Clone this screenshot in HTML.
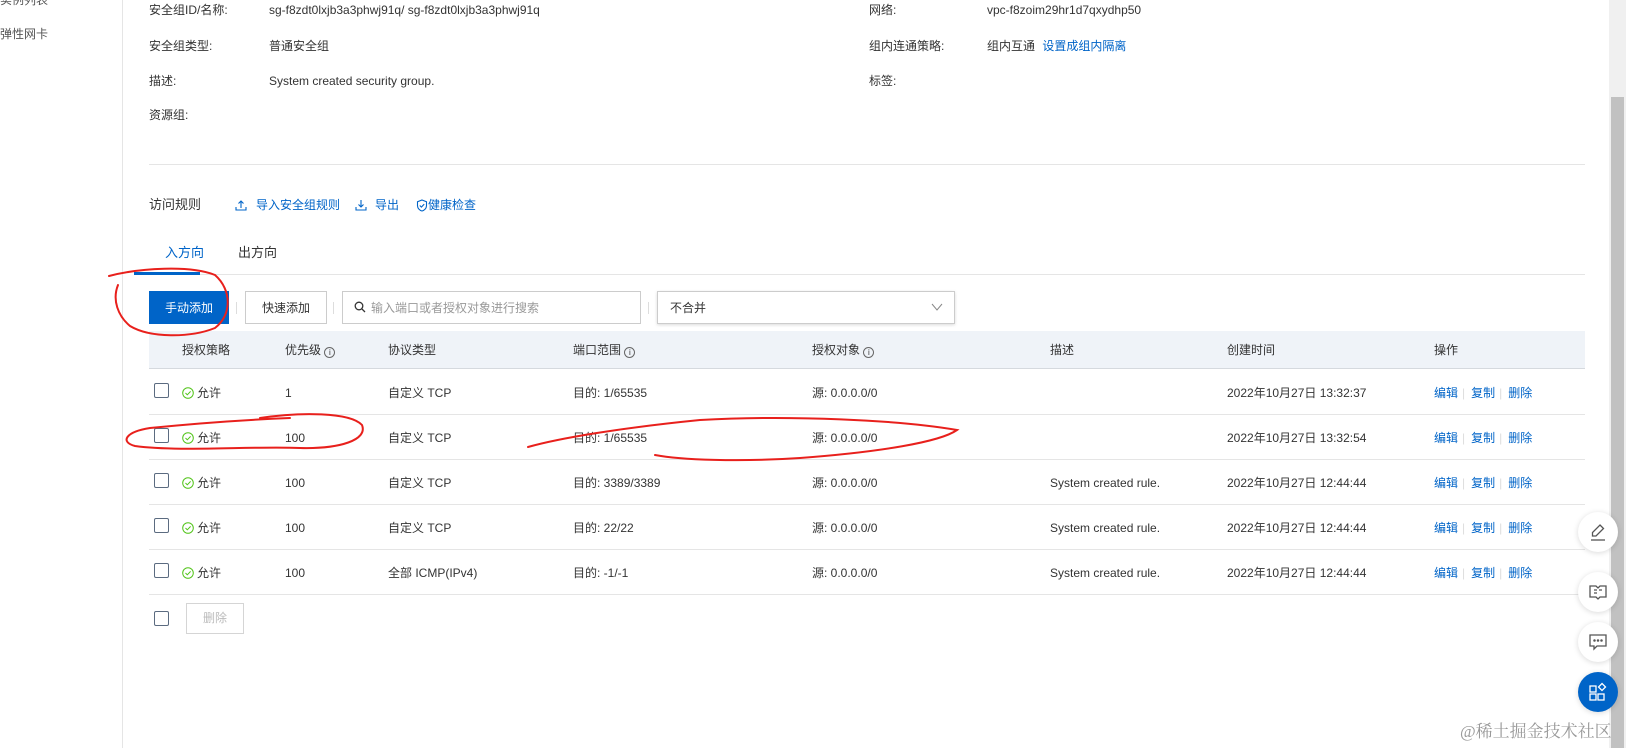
<!DOCTYPE html>
<html><head><meta charset="utf-8">
<style>
*{margin:0;padding:0;box-sizing:border-box}
body{width:1626px;height:748px;overflow:hidden;background:#fff;font-family:"Liberation Sans","Noto Sans CJK SC",sans-serif;font-size:12px;color:#333;position:relative}
.a{position:absolute;white-space:nowrap}
.l{line-height:16px}
.blue{color:#0064c8}
.sb{position:absolute;left:0;top:0;width:123px;height:748px;border-right:1px solid #e5e5e5}
.hr{position:absolute;height:1px;background:#e5e5e5}
.btn{position:absolute;border:1px solid #ccc;background:#fff;text-align:center;line-height:32px;font-size:12px}
.cb{position:absolute;width:15px;height:15px;border:1px solid #5b6b80;border-radius:2px;background:#fff}
.th{position:absolute;left:149px;top:331px;width:1436px;height:38px;background:#eff3f8;border-bottom:1px solid #d5d9de}
.vs{position:absolute;width:1px;height:12px;background:#ddd}
.fb{position:absolute;width:40px;height:40px;border-radius:50%;background:#fff;box-shadow:0 1px 6px rgba(0,0,0,.15)}
</style></head><body>
<div class="sb"></div>
<div class="a l" style="left:0;top:-8px;color:#555">实例列表</div>
<div class="a l" style="left:0;top:26px;color:#555">弹性网卡</div>

<div class="a l" style="left:149px;top:2px">安全组ID/名称:</div>
<div class="a l" style="left:269px;top:2px">sg-f8zdt0lxjb3a3phwj91q/ sg-f8zdt0lxjb3a3phwj91q</div>
<div class="a l" style="left:869px;top:2px">网络:</div>
<div class="a l" style="left:987px;top:2px">vpc-f8zoim29hr1d7qxydhp50</div>
<div class="a l" style="left:149px;top:38px">安全组类型:</div>
<div class="a l" style="left:269px;top:38px">普通安全组</div>
<div class="a l" style="left:869px;top:38px">组内连通策略:</div>
<div class="a l" style="left:987px;top:38px">组内互通 <span class="blue" style="margin-left:4px">设置成组内隔离</span></div>
<div class="a l" style="left:149px;top:73px">描述:</div>
<div class="a l" style="left:269px;top:73px">System created security group.</div>
<div class="a l" style="left:869px;top:73px">标签:</div>
<div class="a l" style="left:149px;top:107px">资源组:</div>
<div class="hr" style="left:149px;top:164px;width:1436px"></div>

<div class="a" style="left:149px;top:196px;font-size:13px;line-height:18px">访问规则</div>
<svg class="a" style="left:235px;top:199px" width="12" height="12" viewBox="0 0 12 12" fill="none" stroke="#0064c8" stroke-width="1.1"><path d="M6 9V2M3.5 4.5L6 2l2.5 2.5M1 8v3h10V8"/></svg>
<div class="a l blue" style="left:256px;top:197px">导入安全组规则</div>
<svg class="a" style="left:355px;top:199px" width="12" height="12" viewBox="0 0 12 12" fill="none" stroke="#0064c8" stroke-width="1.1"><path d="M6 1v7M3.5 5.5L6 8l2.5-2.5M1 8v3h10V8"/></svg>
<div class="a l blue" style="left:375px;top:197px">导出</div>
<svg class="a" style="left:416px;top:199px" width="12" height="13" viewBox="0 0 12 13" fill="none" stroke="#0064c8" stroke-width="1.1"><path d="M6 1l4.5 1.8v4C10.5 9.5 8 11.5 6 12 4 11.5 1.5 9.5 1.5 6.8v-4z"/><path d="M3.8 6.5l1.6 1.6 2.8-3"/></svg>
<div class="a l blue" style="left:428px;top:197px">健康检查</div>

<div class="a" style="left:165px;top:244px;font-size:13px;line-height:18px;color:#0064c8">入方向</div>
<div class="a" style="left:238px;top:244px;font-size:13px;line-height:18px">出方向</div>
<div class="hr" style="left:134px;top:274px;width:1451px"></div>
<div class="a" style="left:134px;top:272px;width:66px;height:3px;background:#0064c8"></div>

<div class="btn" style="left:149px;top:291px;width:80px;height:33px;background:#0064c8;border-color:#0064c8;color:#fff">手动添加</div>
<div class="vs" style="left:236px;top:302px"></div>
<div class="btn" style="left:245px;top:291px;width:82px;height:33px">快速添加</div>
<div class="vs" style="left:333px;top:302px"></div>
<div class="btn" style="left:342px;top:291px;width:299px;height:33px;text-align:left;padding-left:28px;color:#999">输入端口或者授权对象进行搜索</div>
<svg class="a" style="left:354px;top:301px" width="12" height="12" viewBox="0 0 12 12" fill="none" stroke="#333" stroke-width="1.3"><circle cx="5" cy="5" r="3.8"/><path d="M7.8 7.8L11 11"/></svg>
<div class="vs" style="left:648px;top:302px"></div>
<div class="btn" style="left:657px;top:291px;width:298px;height:33px;text-align:left;padding-left:12px;box-shadow:0 1px 3px rgba(0,0,0,.15)">不合并</div>
<svg class="a" style="left:931px;top:302px" width="12" height="10" viewBox="0 0 12 10" fill="none" stroke="#888" stroke-width="1"><path d="M1 2l5 6 5-6"/></svg>

<div class="th"></div>
<div class="a l" style="left:182px;top:342px">授权策略</div>
<div class="a l" style="left:285px;top:342px">优先级 <span style="display:inline-block;width:11px;height:11px;border:1px solid #666;border-radius:50%;font-size:8px;line-height:9px;text-align:center;vertical-align:-1px">i</span></div>
<div class="a l" style="left:388px;top:342px">协议类型</div>
<div class="a l" style="left:573px;top:342px">端口范围 <span style="display:inline-block;width:11px;height:11px;border:1px solid #666;border-radius:50%;font-size:8px;line-height:9px;text-align:center;vertical-align:-1px">i</span></div>
<div class="a l" style="left:812px;top:342px">授权对象 <span style="display:inline-block;width:11px;height:11px;border:1px solid #666;border-radius:50%;font-size:8px;line-height:9px;text-align:center;vertical-align:-1px">i</span></div>
<div class="a l" style="left:1050px;top:342px">描述</div>
<div class="a l" style="left:1227px;top:342px">创建时间</div>
<div class="a l" style="left:1434px;top:342px">操作</div>

<div class="cb" style="left:154px;top:383px"></div>
<svg class="a" style="left:182px;top:387px" width="12" height="12" viewBox="0 0 12 12" fill="none" stroke="#52c41a" stroke-width="1"><circle cx="6" cy="6" r="5.3"/><path d="M3.5 6l1.8 1.8L8.6 4.4"/></svg>
<div class="a l" style="left:197px;top:385px">允许</div>
<div class="a l" style="left:285px;top:385px">1</div>
<div class="a l" style="left:388px;top:385px">自定义 TCP</div>
<div class="a l" style="left:573px;top:385px">目的: 1/65535</div>
<div class="a l" style="left:812px;top:385px">源: 0.0.0.0/0</div>
<div class="a l" style="left:1227px;top:385px">2022年10月27日 13:32:37</div>
<div class="a l blue" style="left:1434px;top:385px">编辑<span style="color:#ddd;margin:0 6px 0 4px">|</span>复制<span style="color:#ddd;margin:0 6px 0 4px">|</span>删除</div>
<div class="hr" style="left:149px;top:414px;width:1436px"></div>

<div class="cb" style="left:154px;top:428px"></div>
<svg class="a" style="left:182px;top:432px" width="12" height="12" viewBox="0 0 12 12" fill="none" stroke="#52c41a" stroke-width="1"><circle cx="6" cy="6" r="5.3"/><path d="M3.5 6l1.8 1.8L8.6 4.4"/></svg>
<div class="a l" style="left:197px;top:430px">允许</div>
<div class="a l" style="left:285px;top:430px">100</div>
<div class="a l" style="left:388px;top:430px">自定义 TCP</div>
<div class="a l" style="left:573px;top:430px">目的: 1/65535</div>
<div class="a l" style="left:812px;top:430px">源: 0.0.0.0/0</div>
<div class="a l" style="left:1227px;top:430px">2022年10月27日 13:32:54</div>
<div class="a l blue" style="left:1434px;top:430px">编辑<span style="color:#ddd;margin:0 6px 0 4px">|</span>复制<span style="color:#ddd;margin:0 6px 0 4px">|</span>删除</div>
<div class="hr" style="left:149px;top:459px;width:1436px"></div>

<div class="cb" style="left:154px;top:473px"></div>
<svg class="a" style="left:182px;top:477px" width="12" height="12" viewBox="0 0 12 12" fill="none" stroke="#52c41a" stroke-width="1"><circle cx="6" cy="6" r="5.3"/><path d="M3.5 6l1.8 1.8L8.6 4.4"/></svg>
<div class="a l" style="left:197px;top:475px">允许</div>
<div class="a l" style="left:285px;top:475px">100</div>
<div class="a l" style="left:388px;top:475px">自定义 TCP</div>
<div class="a l" style="left:573px;top:475px">目的: 3389/3389</div>
<div class="a l" style="left:812px;top:475px">源: 0.0.0.0/0</div>
<div class="a l" style="left:1050px;top:475px">System created rule.</div>
<div class="a l" style="left:1227px;top:475px">2022年10月27日 12:44:44</div>
<div class="a l blue" style="left:1434px;top:475px">编辑<span style="color:#ddd;margin:0 6px 0 4px">|</span>复制<span style="color:#ddd;margin:0 6px 0 4px">|</span>删除</div>
<div class="hr" style="left:149px;top:504px;width:1436px"></div>

<div class="cb" style="left:154px;top:518px"></div>
<svg class="a" style="left:182px;top:522px" width="12" height="12" viewBox="0 0 12 12" fill="none" stroke="#52c41a" stroke-width="1"><circle cx="6" cy="6" r="5.3"/><path d="M3.5 6l1.8 1.8L8.6 4.4"/></svg>
<div class="a l" style="left:197px;top:520px">允许</div>
<div class="a l" style="left:285px;top:520px">100</div>
<div class="a l" style="left:388px;top:520px">自定义 TCP</div>
<div class="a l" style="left:573px;top:520px">目的: 22/22</div>
<div class="a l" style="left:812px;top:520px">源: 0.0.0.0/0</div>
<div class="a l" style="left:1050px;top:520px">System created rule.</div>
<div class="a l" style="left:1227px;top:520px">2022年10月27日 12:44:44</div>
<div class="a l blue" style="left:1434px;top:520px">编辑<span style="color:#ddd;margin:0 6px 0 4px">|</span>复制<span style="color:#ddd;margin:0 6px 0 4px">|</span>删除</div>
<div class="hr" style="left:149px;top:549px;width:1436px"></div>

<div class="cb" style="left:154px;top:563px"></div>
<svg class="a" style="left:182px;top:567px" width="12" height="12" viewBox="0 0 12 12" fill="none" stroke="#52c41a" stroke-width="1"><circle cx="6" cy="6" r="5.3"/><path d="M3.5 6l1.8 1.8L8.6 4.4"/></svg>
<div class="a l" style="left:197px;top:565px">允许</div>
<div class="a l" style="left:285px;top:565px">100</div>
<div class="a l" style="left:388px;top:565px">全部 ICMP(IPv4)</div>
<div class="a l" style="left:573px;top:565px">目的: -1/-1</div>
<div class="a l" style="left:812px;top:565px">源: 0.0.0.0/0</div>
<div class="a l" style="left:1050px;top:565px">System created rule.</div>
<div class="a l" style="left:1227px;top:565px">2022年10月27日 12:44:44</div>
<div class="a l blue" style="left:1434px;top:565px">编辑<span style="color:#ddd;margin:0 6px 0 4px">|</span>复制<span style="color:#ddd;margin:0 6px 0 4px">|</span>删除</div>
<div class="hr" style="left:149px;top:594px;width:1436px"></div>

<div class="cb" style="left:154px;top:611px"></div>
<div class="btn" style="left:186px;top:603px;width:58px;height:31px;line-height:29px;color:#bbb;border-color:#d5d5d5">删除</div>

<!-- red annotations -->
<svg class="a" style="left:0;top:0" width="1000" height="500" viewBox="0 0 1000 500" fill="none" stroke="#e8201c" stroke-width="2" stroke-linecap="round">
<path d="M109 276C140 268 190 265 215 275C232 290 232 315 215 328C190 338 150 338 130 326C118 316 112 300 118 285"/>
<path d="M260 418C300 412 350 412 362 425C368 440 340 449 300 448C250 446 180 452 135 446C120 442 125 432 150 428C190 424 240 420 290 418"/>
<path d="M528 447C560 438 620 428 700 420C790 415 900 420 957 430C940 442 880 452 800 458C740 462 680 460 655 455"/>
</svg>

<div class="a" style="left:1609px;top:0;width:17px;height:748px;background:#f0f0f0"></div>
<div class="a" style="left:1611px;top:97px;width:13px;height:651px;background:#c1c1c1"></div>

<div class="fb" style="left:1578px;top:512px"></div>
<svg class="a" style="left:1588px;top:522px" width="20" height="20" viewBox="0 0 20 20" fill="none" stroke="#555" stroke-width="1.3"><path d="M12 3l3.5 3.5L8 14H4.5v-3.5z"/><path d="M3 18h14"/></svg>
<div class="fb" style="left:1578px;top:572px"></div>
<svg class="a" style="left:1588px;top:582px" width="20" height="20" viewBox="0 0 20 20" fill="none" stroke="#555" stroke-width="1.3"><path d="M2 4h6l2 2 2-2h6v11h-6l-2 2-2-2H2z"/><path d="M6 8h3M6 11h3M11 8h3"/></svg>
<div class="fb" style="left:1578px;top:622px"></div>
<svg class="a" style="left:1588px;top:632px" width="20" height="20" viewBox="0 0 20 20" fill="none" stroke="#555" stroke-width="1.3"><path d="M2 3h16v11H9l-3 3v-3H2z"/><circle cx="6.5" cy="8.5" r=".6" fill="#555"/><circle cx="10" cy="8.5" r=".6" fill="#555"/><circle cx="13.5" cy="8.5" r=".6" fill="#555"/></svg>
<div class="fb" style="left:1578px;top:672px;background:#0064c8"></div>
<svg class="a" style="left:1588px;top:682px" width="20" height="20" viewBox="0 0 20 20" fill="none" stroke="#fff" stroke-width="1.3"><rect x="2" y="4" width="6" height="6"/><rect x="2" y="12" width="6" height="6"/><rect x="10" y="12" width="6" height="6"/><path d="M14 1.5l3.5 3.5-3.5 3.5-3.5-3.5z"/></svg>
<div class="a" style="left:1460px;top:722px;font-size:17px;line-height:20px;color:#999;font-family:'Liberation Serif','Noto Serif CJK SC',serif">@稀土掘金技术社区</div>
</body></html>
